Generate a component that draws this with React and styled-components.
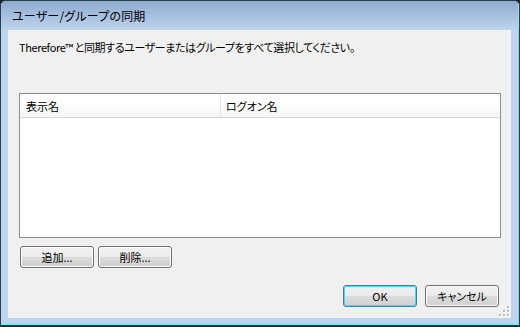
import React from "react";
import styled, { createGlobalStyle } from "styled-components";

const GlobalStyle = createGlobalStyle`
  html, body {
    margin: 0;
    padding: 0;
    background: #1c2630;
  }
  body {
    font-family: "Noto Sans CJK JP", "Liberation Sans", sans-serif;
    font-size: 11px;
    color: #000;
  }
`;

const Window = styled.div`
  width: 520px;
  height: 326px;
  box-sizing: border-box;
  border: 1px solid #2c3e52;
  border-radius: 6px 6px 0 0;
  background: #bcd4ed;
  box-shadow: inset -1px -1px 0 #6fdcf0;
  display: flex;
  flex-direction: column;
  overflow: hidden;
`;

const TitleBar = styled.div`
  height: 29px;
  flex: none;
  display: flex;
  align-items: center;
  padding-left: 11px;
  background: linear-gradient(#8eabce, #bcd4ed);
  box-shadow: inset -1px 0 0 #8fe0f2;
  font-size: 12px;
  font-feature-settings: "palt";
  letter-spacing: 0.2px;
`;

const Frame = styled.div`
  flex: 1;
  padding: 0 8px 7px 7px;
`;

const Client = styled.div`
  position: relative;
  height: 288px;
  background: #f0f0f0;
  display: flex;
  flex-direction: column;
  padding: 10px 10px 11px 11px;
  box-sizing: border-box;
`;

const Prompt = styled.div`
  line-height: 14px;
  font-feature-settings: "palt";
  letter-spacing: -0.4px;
  white-space: nowrap;
`;

const ListView = styled.div`
  margin-top: 39px;
  height: 145px;
  box-sizing: border-box;
  border: 1px solid #8a8d93;
  background: #fff;
  display: flex;
  flex-direction: column;
`;

const Header = styled.div`
  height: 24px;
  flex: none;
  display: grid;
  grid-template-columns: 201px 1fr;
  background: linear-gradient(#ffffff 40%, #f3f4f6);
  border-bottom: 1px solid #d6d8db;
  box-sizing: border-box;
`;

const HeaderCell = styled.div`
  display: flex;
  align-items: center;
  padding-left: ${(p) => p.$pad}px;
  border-right: 1px solid ${(p) => (p.$last ? "transparent" : "#e3e5e8")};
  font-feature-settings: "palt";
`;

const Row = styled.div`
  display: flex;
  gap: ${(p) => p.$gap}px;
  margin-top: ${(p) => p.$top}px;
  justify-content: ${(p) => (p.$end ? "flex-end" : "flex-start")};
  padding-left: ${(p) => (p.$end ? 0 : 1)}px;
  padding-right: ${(p) => (p.$end ? 2 : 0)}px;
`;

const Button = styled.button`
  width: 74px;
  height: 22px;
  padding: 0;
  border-radius: 3px;
  border: 1px solid ${(p) => (p.$default ? "#3c7fb1" : "#707070")};
  background: linear-gradient(#f2f2f2 0%, #ebebeb 48%, #dddddd 50%, #cfcfcf 100%);
  box-shadow: inset 0 0 0 1px ${(p) => (p.$default ? "#48d8fb" : "#fcfcfc")};
  font-family: "Noto Sans CJK JP", "Liberation Sans", sans-serif;
  font-size: 11px;
  font-feature-settings: "palt";
  color: #000;
  line-height: 1;
`;

const Grip = styled.svg`
  position: absolute;
  right: 1px;
  bottom: 1px;
`;

function ResizeGrip() {
  const dots = [
    [9, 1],
    [9, 5],
    [5, 5],
    [9, 9],
    [5, 9],
    [1, 9],
  ];
  return (
    <Grip width="12" height="12" viewBox="0 0 12 12">
      {dots.map(([x, y]) => (
        <g key={`${x}-${y}`}>
          <rect x={x + 1} y={y + 1} width="2" height="2" fill="#ffffff" />
          <rect x={x} y={y} width="2" height="2" fill="#b8bcc2" />
        </g>
      ))}
    </Grip>
  );
}

export default function App() {
  return (
    <>
      <GlobalStyle />
      <Window>
        <TitleBar>ユーザー/グループの同期</TitleBar>
        <Frame>
          <Client>
            <Prompt>
              Therefore™ と同期するユーザーまたはグループをすべて選択してください。
            </Prompt>
            <ListView>
              <Header>
                <HeaderCell $pad={6}>表示名</HeaderCell>
                <HeaderCell $pad={5} $last>
                  ログオン名
                </HeaderCell>
              </Header>
            </ListView>
            <Row $gap={4} $top={8}>
              <Button>追加...</Button>
              <Button>削除...</Button>
            </Row>
            <Row $gap={8} $top={17} $end>
              <Button $default>OK</Button>
              <Button>キャンセル</Button>
            </Row>
            <ResizeGrip />
          </Client>
        </Frame>
      </Window>
    </>
  );
}
